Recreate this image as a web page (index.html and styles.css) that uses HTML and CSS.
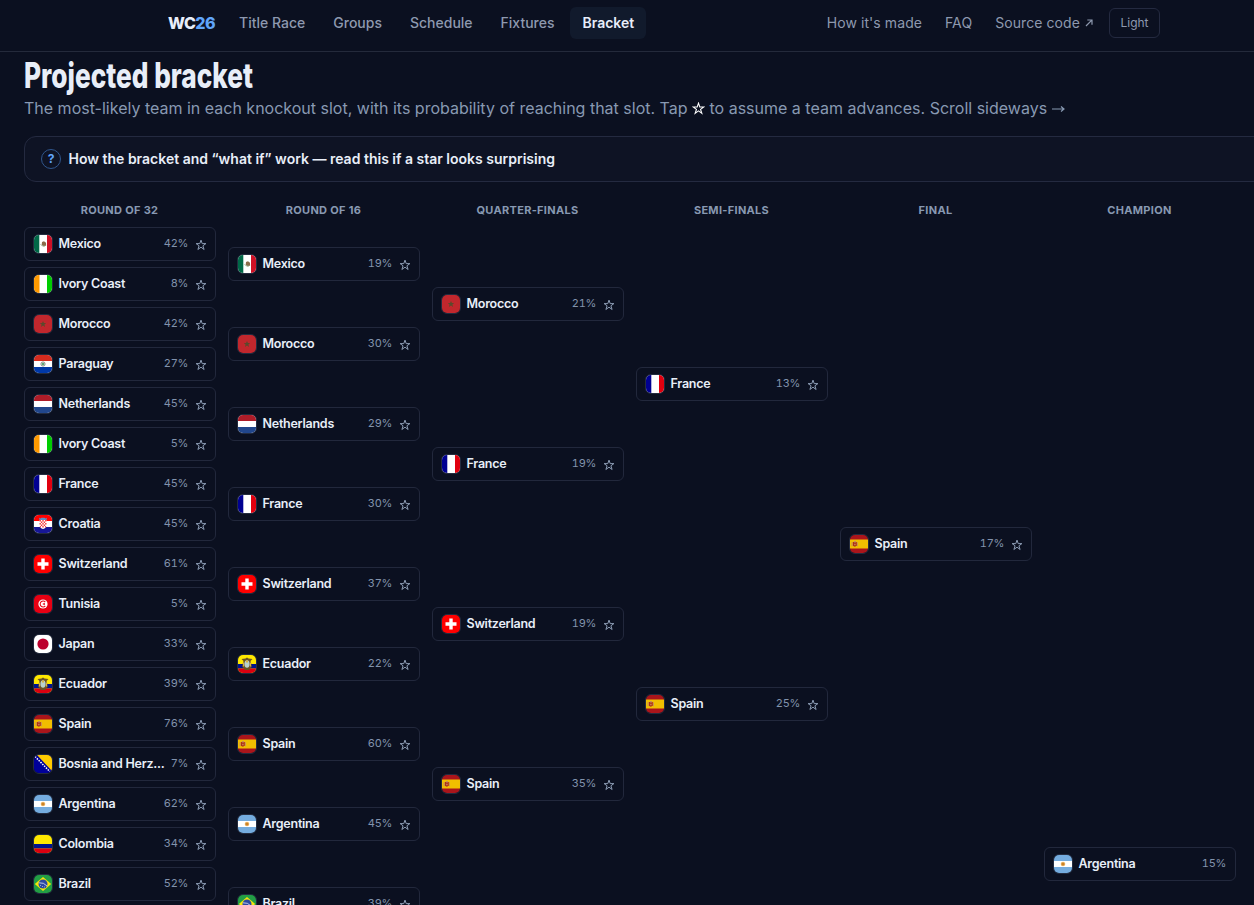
FILE: index.html
```html
<!DOCTYPE html>
<html lang="en">
<head>
<title>WC26 - Projected bracket</title>
<meta charset="UTF-8">
<meta name="viewport" content="width=device-width, initial-scale=1">
<link rel="stylesheet" href="styles.css">
</head>
<body>

<!-- flags and icons, used by id -->
<svg class="sprite" aria-hidden="true">
  <symbol id="star" viewBox="0 0 12 12"><path d="M6 1.1 L7.2 4.6 H10.9 L7.9 6.8 L9.1 10.5 L6 8.2 L2.9 10.5 L4.1 6.8 L1.1 4.6 H4.8 Z" fill="none" stroke="currentColor" stroke-width="1"/></symbol>
  <symbol id="mx" viewBox="0 0 18 18"><path fill="#fff" d="M0 0h18v18H0z"/><path fill="#006847" d="M0 0h5.3v18H0z"/><path fill="#ce1126" d="M13 0h5v18h-5z"/><path fill="#8b6b4a" d="M8 7l2-.8 2 1.500.2 2.700-2.500 1-2-1.500z"/><path d="M6.500 9.200q1.200 2.600 4.500 1.800" fill="none" stroke="#8fae91" stroke-width=".8"/></symbol>
  <symbol id="ci" viewBox="0 0 18 18"><path fill="#fff" d="M0 0h18v18H0z"/><path fill="#ff9a00" d="M0 0h5.5v18H0z"/><path fill="#00cd00" d="M13 0h5v18h-5z"/></symbol>
  <symbol id="ma" viewBox="0 0 18 18"><path fill="#c1272d" d="M0 0h18v18H0z"/><path fill="#5b4a2c" d="M9 6l.9 2.100h2.300l-1.800 1.500.7 2.300L9 10.500l-2.100 1.400.7-2.300-1.800-1.500h2.300z"/></symbol>
  <symbol id="py" viewBox="0 0 18 18"><path fill="#fff" d="M0 0h18v18H0z"/><path fill="#d52b1e" d="M0 0h18v6H0z"/><path fill="#0038a8" d="M0 12h18v6H0z"/><circle cx="9" cy="9" r="2.100" fill="#dfe8df" stroke="#7d8580" stroke-width=".9"/><circle cx="9" cy="9" r="1.100" fill="#3d9a5c"/></symbol>
  <symbol id="nl" viewBox="0 0 18 18"><path fill="#fff" d="M0 0h18v18H0z"/><path fill="#ae1c28" d="M0 0h18v6H0z"/><path fill="#21468b" d="M0 12h18v6H0z"/></symbol>
  <symbol id="fr" viewBox="0 0 18 18"><path fill="#fff" d="M0 0h18v18H0z"/><path fill="#000091" d="M0 0h5.3v18H0z"/><path fill="#e1000f" d="M13 0h5v18h-5z"/></symbol>
  <symbol id="hr" viewBox="0 0 18 18"><path fill="#fff" d="M0 0h18v18H0z"/><path fill="#f00" d="M0 0h18v6H0z"/><path fill="#171796" d="M0 12h18v6H0z"/><path fill="#fff" d="M5.5 5h7v5.5q-.4 2.8-3.5 3.4-3.1-.6-3.5-3.4z"/><path fill="#f23b3b" d="M5.5 5h1.4v1.5H5.500zM8.300 5h1.400v1.500H8.300zM11.100 5h1.400v1.500h-1.400zM6.900 6.500h1.400V8H6.900zM9.700 6.500h1.400V8H9.700zM5.500 8h1.400v1.500H5.500zM8.300 8h1.400v1.500H8.300zM11.100 8h1.400v1.500h-1.400zM6.900 9.500h1.400V11H6.900zM9.700 9.500h1.400V11H9.700zM5.900 11h1v1.500h-1zM8.300 11h1.400v1.500H8.300zM11.100 11h1v1.500h-1z"/><path fill="#5a8fc4" d="M5 2.800l1.500.6L8 2.500l1 .6 1-.6 1.500.9 1.500-.6L12.500 5h-7z"/></symbol>
  <symbol id="ch" viewBox="0 0 18 18"><path fill="#f00" d="M0 0h18v18H0z"/><path fill="#fff" d="M7.300 3.500h3.400v3.800h3.800v3.400h-3.800v3.800H7.300v-3.800H3.500V7.300h3.800z"/></symbol>
  <symbol id="tn" viewBox="0 0 18 18"><path fill="#e70013" d="M0 0h18v18H0z"/><circle cx="9" cy="9" r="4.600" fill="#fff"/><path d="M11.300 6.900a3 3 0 1 0 0 4.200" fill="none" stroke="#e70013" stroke-width="1.100"/><path fill="#e70013" d="M8.300 9l2.900-1.400-.6 1.400.6 1.400z"/></symbol>
  <symbol id="jp" viewBox="0 0 18 18"><path fill="#fff" d="M0 0h18v18H0z"/><circle cx="9" cy="9" r="5.600" fill="#bc002d"/></symbol>
  <symbol id="ec" viewBox="0 0 18 18"><path fill="#ffe800" d="M0 0h18v18H0z"/><path fill="#00148e" d="M0 9h18v4.500H0z"/><path fill="#da0010" d="M0 13.500h18V18H0z"/><path fill="#6b5324" d="M3.500 4L7.500 3.500 9 2.400l1.500 1.100 4 .5-2 2 1.500 5.500L11 15H7l-3-3.500L5.500 6z"/><ellipse cx="9" cy="9" rx="2.600" ry="3.800" fill="#b9d2cd"/><path fill="#d9b441" d="M8 5.500h2v2H8zM5 7.500h1v4H5zM12 7.500h1v4h-1z"/></symbol>
  <symbol id="es" viewBox="0 0 18 18"><path fill="#aa151b" d="M0 0h18v18H0z"/><path fill="#f1bf00" d="M0 4.500h18v9H0z"/><path fill="#ad2f1b" d="M2.800 7h4v3.800l-2 1-2-1z"/><path fill="#c8905a" d="M1.500 7.200h1v4h-1zM7.100 7.200h.9v4h-.9zM4 6h2v1.500H4zM4.200 8.800h1.400v1.400H4.200z"/></symbol>
  <symbol id="ba" viewBox="0 0 18 18"><path fill="#009" d="M0 0h18v18H0z"/><path fill="#fc0" d="M3 0H18v16z"/><path d="M1 1.500l14.800 15" stroke="#fff" stroke-width="1.500" stroke-dasharray="1.500 1.100"/></symbol>
  <symbol id="ar" viewBox="0 0 18 18"><path fill="#74acdf" d="M0 0h18v18H0z"/><path fill="#fff" d="M0 6h18v6H0z"/><circle cx="9" cy="9" r="2.300" fill="#efbd70"/><circle cx="9" cy="9" r="1.600" fill="#c9822b"/></symbol>
  <symbol id="co" viewBox="0 0 18 18"><path fill="#ffe800" d="M0 0h18v18H0z"/><path fill="#00148e" d="M0 9h18v4.500H0z"/><path fill="#da0010" d="M0 13.500h18V18H0z"/></symbol>
  <symbol id="br" viewBox="0 0 18 18"><path fill="#229e45" d="M0 0h18v18H0z"/><path fill="#f8e509" d="M9 2l8.200 7L9 16 .8 9z"/><circle cx="9" cy="9" r="4.500" fill="#2b49a3"/><path d="M4.800 7.800q5-.6 8.200 3.200" fill="none" stroke="#dfe8f5" stroke-width=".8"/><path fill="#92a6d4" d="M6 10h1v1H6zM8 11h1v1H8zM10 11.500h1v1h-1z"/></symbol>
</svg>

<div class="navbar">
  <div class="navbar-inner">
    <a class="brand" href="#">WC<span>26</span></a>
    <a class="link" href="#">Title Race</a>
    <a class="link" href="#">Groups</a>
    <a class="link" href="#">Schedule</a>
    <a class="link" href="#">Fixtures</a>
    <a class="link active" href="#">Bracket</a>
    <div class="right">
      <a href="#">How it's made</a>
      <a href="#">FAQ</a>
      <a href="#">Source code <svg class="out" viewBox="0 0 8 8"><path d="M1 7L6.800 1.200M2.300 1h4.700v4.700" fill="none" stroke="currentColor" stroke-width="1.200"/></svg></a>
      <button class="theme">Light</button>
    </div>
  </div>
</div>

<div class="main">
  <h1><span>Projected bracket</span></h1>
  <p class="intro">The most-likely team in each knockout slot, with its probability of reaching that slot. Tap <svg class="star-inline"><use href="#star"/></svg> to assume a team advances. Scroll sideways <svg class="arrow" viewBox="0 0 13 8"><path d="M0 4h12M9 1.500L12 4 9 6.500" fill="none" stroke="currentColor" stroke-width="1.200"/></svg></p>

  <div class="info">
    <span class="info-icon">?</span>
    <span class="info-text">How the bracket and “what if” work — read this if a star looks surprising</span>
  </div>

  <div class="bracket" id="bracket"></div>
</div>

<script>
var names = {
  mx: 'Mexico', ci: 'Ivory Coast', ma: 'Morocco', py: 'Paraguay', nl: 'Netherlands', fr: 'France',
  hr: 'Croatia', ch: 'Switzerland', tn: 'Tunisia', jp: 'Japan', ec: 'Ecuador', es: 'Spain',
  ba: 'Bosnia and Herz...', ar: 'Argentina', co: 'Colombia', br: 'Brazil'
};

// each slot is [team, chance of reaching it]
var rounds = [
  { title: 'Round of 32', cls: 'r32', slots: [['mx', 42], ['ci', 8], ['ma', 42], ['py', 27], ['nl', 45], ['ci', 5], ['fr', 45], ['hr', 45], ['ch', 61], ['tn', 5], ['jp', 33], ['ec', 39], ['es', 76], ['ba', 7], ['ar', 62], ['co', 34], ['br', 52]] },
  { title: 'Round of 16', cls: 'r16', slots: [['mx', 19], ['ma', 30], ['nl', 29], ['fr', 30], ['ch', 37], ['ec', 22], ['es', 60], ['ar', 45], ['br', 39]] },
  { title: 'Quarter-finals', cls: 'qf', slots: [['ma', 21], ['fr', 19], ['ch', 19], ['es', 35]] },
  { title: 'Semi-finals', cls: 'sf', slots: [['fr', 13], ['es', 25]] },
  { title: 'Final', cls: 'final', slots: [['es', 17]] },
  { title: 'Champion', cls: 'champion', slots: [['ar', 15]] }
];

var html = '';
rounds.forEach(function (r) {
  html += '<div class="round ' + r.cls + '"><h2>' + r.title + '</h2>';
  r.slots.forEach(function (s) {
    html += '<div class="slot"><div class="team">' +
      '<svg class="flag"><use href="#' + s[0] + '"/></svg>' +
      '<span class="name">' + names[s[0]] + '</span>' +
      '<span class="pct">' + s[1] + '%</span>';
    // nothing left to assume once a team is champion
    if (r.cls != 'champion') {
      html += '<svg class="star"><use href="#star"/></svg>';
    }
    html += '</div></div>';
  });
  html += '</div>';
});
document.getElementById('bracket').innerHTML = html;
</script>
</body>
</html>
```
FILE: styles.css
```css
* {
  box-sizing: border-box;
}

html, body {
  height: 100%;
  overflow: hidden;
}

body {
  font-family: Inter, "Liberation Sans", sans-serif;
  margin: 0;
  background: #0b1020;
  color: #e8eef8;
}

.sprite {
  display: none;
}

/* Navigation */
.navbar {
  height: 52px;
  padding-top: 7px;
  border-bottom: 1px solid #242a3b;
}

.navbar-inner {
  display: flex;
  align-items: center;
  gap: 4px;
  width: 992px;
  height: 32px;
  margin-left: 168px;
  font-size: 14px;
}

.navbar a {
  color: #8e99af;
  text-decoration: none;
  white-space: nowrap;
}

.navbar .brand {
  margin-right: 8px;
  font-size: 16px;
  font-weight: 800;
  letter-spacing: -0.5px;
  color: #e8eefa;
}

.navbar .brand span {
  color: #60a5fa;
}

.navbar .link {
  padding: 0 12px;
  line-height: 32px;
  font-weight: 500;
  border-radius: 6px;
}

.navbar .active {
  padding: 0 11.5px 0 12px;
  background: #111a2c;
  color: #e8eefa;
  font-weight: 600;
}

.right {
  display: flex;
  align-items: center;
  gap: 23px;
  height: 30px;
  margin-left: auto;
}

.right a {
  letter-spacing: 0.08px;
  padding-bottom: 1px;
}

.out {
  width: 8px;
  height: 8px;
  margin-left: 1px;
  vertical-align: 1px;
}

.theme {
  width: 51px;
  height: 30px;
  margin-left: -7px;
  padding: 0 0 1px;
  font-family: inherit;
  font-size: 12px;
  color: #8e99af;
  background: none;
  border: 1px solid #242a40;
  border-radius: 6px;
}

/* Page */
.main {
  width: 1304px;
  padding: 4px 24px 0;
}

h1 {
  margin: -1px 0 1px;
  font-size: 35px;
  line-height: 40px;
  font-weight: 800;
}

/* condensed heading */
h1 span {
  display: inline-block;
  transform: scaleX(0.748);
  transform-origin: left;
}

.intro {
  margin: 0 0 16px;
  font-size: 16px;
  line-height: 24px;
  color: #8899b2;
  white-space: nowrap;
}

.star-inline {
  width: 13px;
  height: 13px;
  color: #fff;
  vertical-align: -1px;
}

.arrow {
  width: 13px;
  height: 8px;
  vertical-align: 1px;
}

.info {
  display: flex;
  align-items: center;
  gap: 7px;
  height: 46px;
  padding: 0 16px;
  font-size: 14px;
  font-weight: 600;
  background: #0e1324;
  border: 1px solid #242a40;
  border-radius: 12px;
}

.info-text {
  padding: 0 0 2px 0.5px;
}

.info-icon {
  width: 20px;
  height: 20px;
  line-height: 18px;
  text-align: center;
  font-size: 12px;
  font-weight: 700;
  color: #60a5fa;
  border: 1px solid #30568c;
  border-radius: 50%;
}

/* Bracket */
.bracket {
  display: grid;
  grid-template-columns: repeat(6, 192px);
  gap: 12px;
}

.round h2 {
  margin: 20px 1px 6px 0;
  font-size: 11px;
  line-height: 16px;
  font-weight: 700;
  letter-spacing: 0.3px;
  text-align: center;
  text-transform: uppercase;
  color: #8899b2;
}

.slot {
  display: flex;
  align-items: center;
  height: 40px;
}

/* slots double in height every round */
.r16 .slot { height: 80px; }
.qf .slot { height: 160px; }
.sf .slot { height: 320px; }
.final .slot { height: 640px; }
.champion .slot { height: 1280px; }

.team {
  display: flex;
  align-items: center;
  width: 192px;
  height: 34px;
  padding: 0 8px;
  border: 1px solid #22283c;
  border-radius: 6px;
}

.flag {
  flex: none;
  width: 20px;
  height: 20px;
  margin-right: 5px;
  border: 1px solid #242c3f;
  border-radius: 6px;
}

.name {
  flex: 1;
  min-width: 0;
  padding: 0 0 1px 0.5px;
  white-space: nowrap;
  font-size: 12.5px;
  font-weight: 600;
  letter-spacing: -0.25px;
}

.pct {
  margin: 0 1px 2px 6px;
  font-size: 11px;
  font-variant-numeric: tabular-nums;
  letter-spacing: -0.3px;
  color: #8293ad;
}

.star {
  flex: none;
  width: 12px;
  height: 12px;
  margin: 1px 0 0 6px;
  color: #8c9cb4;
}
```
